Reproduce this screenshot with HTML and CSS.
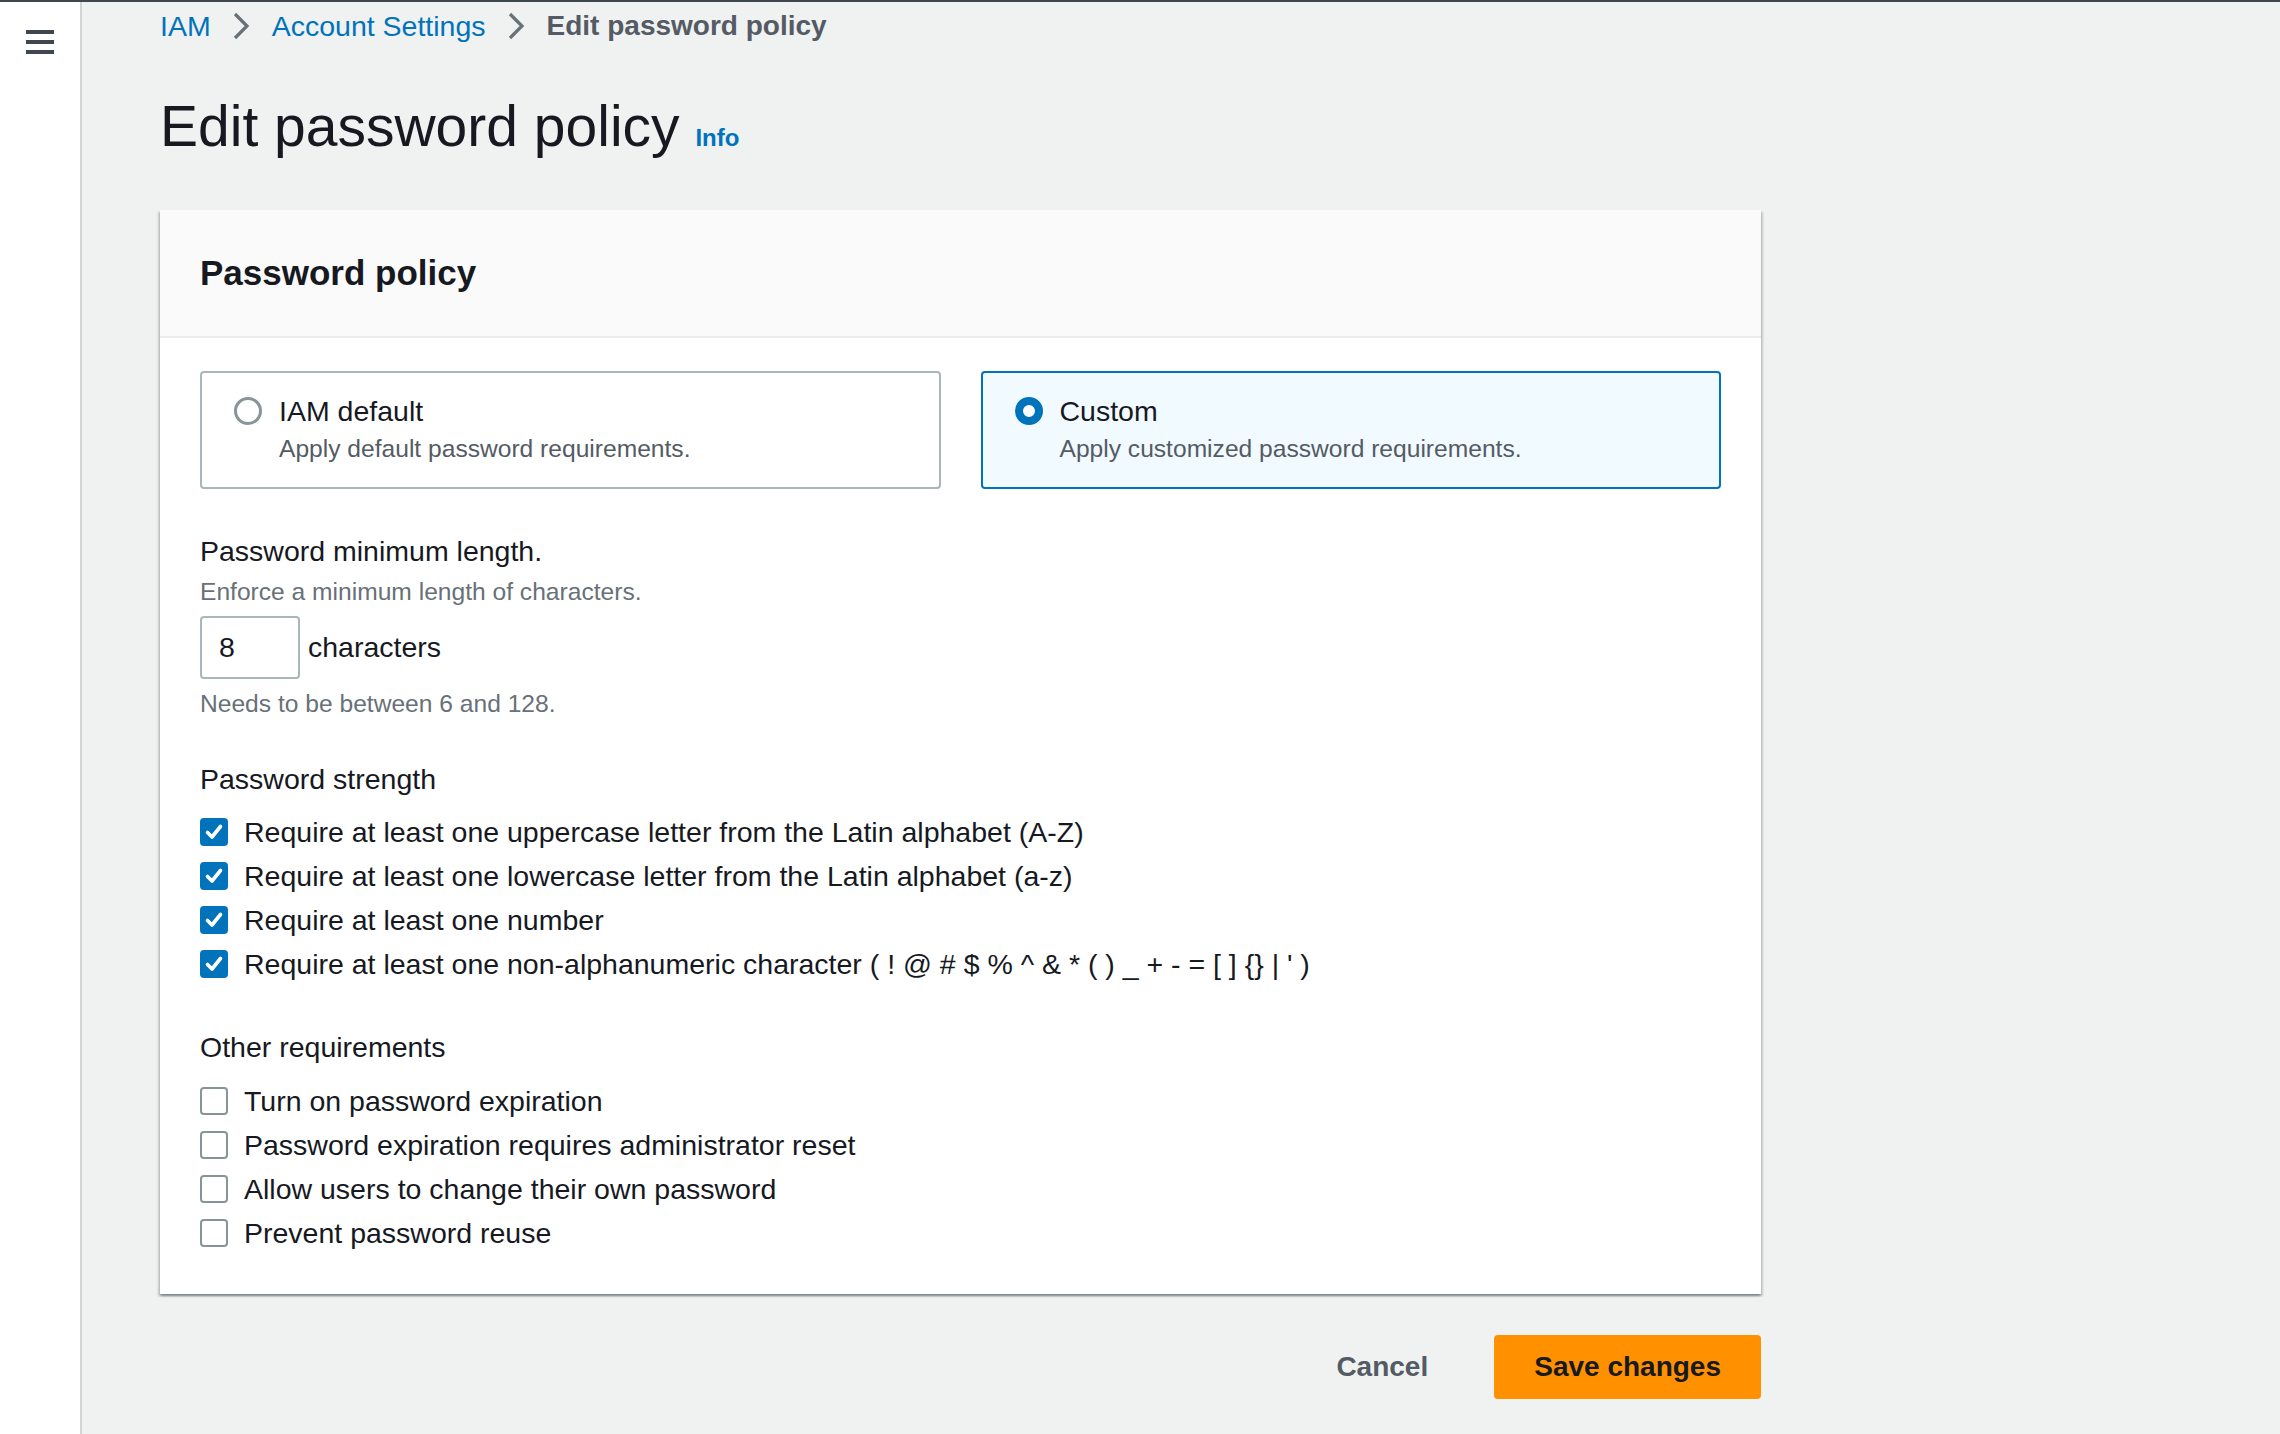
FILE: index.html
```html
<!DOCTYPE html>
<html lang="en">
<head>
<meta charset="utf-8">
<title>Edit password policy</title>
<link rel="stylesheet" href="styles.css">
</head>
<body>
<div class="topline"></div>
<div class="shell">
  <aside class="sidebar">
    <button class="hamburger" aria-label="Open navigation">
      <span></span><span></span><span></span>
    </button>
  </aside>
  <main class="main">
    <nav class="breadcrumbs">
      <a class="crumb-link" href="#">IAM</a>
      <svg class="chev" width="18" height="30" viewBox="0 0 18 30"><path d="M3 3 L15 15 L3 27" fill="none" stroke="#687078" stroke-width="3.2"/></svg>
      <a class="crumb-link" href="#">Account Settings</a>
      <svg class="chev" width="18" height="30" viewBox="0 0 18 30"><path d="M3 3 L15 15 L3 27" fill="none" stroke="#687078" stroke-width="3.2"/></svg>
      <span class="crumb-current">Edit password policy</span>
    </nav>

    <h1 class="page-title">Edit password policy <a class="info-link" href="#">Info</a></h1>

    <section class="card">
      <header class="card-header">
        <h2 class="card-title">Password policy</h2>
      </header>
      <div class="card-body">
        <div class="tiles">
          <label class="tile">
            <span class="radio"></span>
            <span class="tile-text">
              <span class="tile-title">IAM default</span>
              <span class="tile-desc">Apply default password requirements.</span>
            </span>
          </label>
          <label class="tile tile-selected">
            <span class="radio radio-checked"></span>
            <span class="tile-text">
              <span class="tile-title">Custom</span>
              <span class="tile-desc">Apply customized password requirements.</span>
            </span>
          </label>
        </div>

        <div class="field field-length">
          <div class="field-label">Password minimum length.</div>
          <div class="field-desc">Enforce a minimum length of characters.</div>
          <div class="length-row">
            <div class="num-input">8</div>
            <span class="unit">characters</span>
          </div>
          <div class="field-constraint">Needs to be between 6 and 128.</div>
        </div>

        <div class="field field-strength">
          <div class="field-label">Password strength</div>
          <ul class="checks">
            <li class="check-row"><span class="cbox cbox-on"><svg width="28" height="28" viewBox="0 0 28 28"><path d="M7.5 14.5 L12 19 L20.5 8.5" fill="none" stroke="#fff" stroke-width="3.6" stroke-linecap="round" stroke-linejoin="round"/></svg></span><span>Require at least one uppercase letter from the Latin alphabet (A-Z)</span></li>
            <li class="check-row"><span class="cbox cbox-on"><svg width="28" height="28" viewBox="0 0 28 28"><path d="M7.5 14.5 L12 19 L20.5 8.5" fill="none" stroke="#fff" stroke-width="3.6" stroke-linecap="round" stroke-linejoin="round"/></svg></span><span>Require at least one lowercase letter from the Latin alphabet (a-z)</span></li>
            <li class="check-row"><span class="cbox cbox-on"><svg width="28" height="28" viewBox="0 0 28 28"><path d="M7.5 14.5 L12 19 L20.5 8.5" fill="none" stroke="#fff" stroke-width="3.6" stroke-linecap="round" stroke-linejoin="round"/></svg></span><span>Require at least one number</span></li>
            <li class="check-row"><span class="cbox cbox-on"><svg width="28" height="28" viewBox="0 0 28 28"><path d="M7.5 14.5 L12 19 L20.5 8.5" fill="none" stroke="#fff" stroke-width="3.6" stroke-linecap="round" stroke-linejoin="round"/></svg></span><span>Require at least one non-alphanumeric character ( ! @ # $ % ^ &amp; * ( ) _ + - = [ ] {} | ' )</span></li>
          </ul>
        </div>

        <div class="field field-other">
          <div class="field-label">Other requirements</div>
          <ul class="checks">
            <li class="check-row"><span class="cbox"></span><span>Turn on password expiration</span></li>
            <li class="check-row"><span class="cbox"></span><span>Password expiration requires administrator reset</span></li>
            <li class="check-row"><span class="cbox"></span><span>Allow users to change their own password</span></li>
            <li class="check-row"><span class="cbox"></span><span>Prevent password reuse</span></li>
          </ul>
        </div>
      </div>
    </section>

    <div class="actions">
      <button class="btn btn-link">Cancel</button>
      <button class="btn btn-primary">Save changes</button>
    </div>
  </main>
</div>
</body>
</html>
```

FILE: styles.css
```css
* { box-sizing: border-box; }

html, body {
  margin: 0;
  padding: 0;
  height: 100%;
}

body {
  font-family: "Liberation Sans", Arial, sans-serif;
  font-size: 28.5px;
  color: #16191f;
  background: #f0f1f1;
}

.topline {
  height: 2px;
  background: #414750;
}

.shell {
  display: flex;
  min-height: calc(100% - 2px);
}

.sidebar {
  width: 82px;
  flex: 0 0 82px;
  background: #ffffff;
  border-right: 2px solid #cfd4d4;
}

.hamburger {
  display: flex;
  flex-direction: column;
  gap: 6px;
  margin: 28px 0 0 26px;
  padding: 0;
  border: 0;
  background: none;
}

.hamburger span {
  display: block;
  width: 28px;
  height: 4px;
  background: #414750;
}

.main {
  flex: 1;
  padding: 4px 0 0 78px;
}

.breadcrumbs {
  display: flex;
  align-items: center;
  height: 40px;
  line-height: 40px;
}

.crumb-link {
  color: #0073bb;
  text-decoration: none;
}

.chev {
  margin: 0 22px 0 21px;
}

.crumb-current {
  color: #545b64;
  font-weight: bold;
  font-size: 28px;
}

.page-title {
  margin: 48px 0 0 0;
  font-size: 57px;
  font-weight: normal;
  line-height: 64px;
  color: #16191f;
}

.info-link {
  margin-left: 0;
  font-size: 24px;
  font-weight: bold;
  color: #0073bb;
  text-decoration: none;
}

.card {
  width: 1601px;
  margin-top: 40px;
  background: #ffffff;
  box-shadow: 0 2px 2px rgba(0, 28, 36, 0.3), 2px 2px 2px rgba(0, 28, 36, 0.15), -2px 2px 2px rgba(0, 28, 36, 0.15);
}

.card-header {
  padding: 40px 40px 41px 40px;
  background: #fafafa;
  border-bottom: 2px solid #eaeded;
}

.card-title {
  margin: 0;
  font-size: 35px;
  line-height: 45px;
  font-weight: bold;
}

.card-body {
  padding: 33px 40px 39px 40px;
}

.tiles {
  display: grid;
  grid-template-columns: 1fr 1fr;
  gap: 40px;
}

.tile {
  display: flex;
  align-items: flex-start;
  gap: 17px;
  padding: 18px 32px 20px 32px;
  border: 2px solid #aab7b8;
  border-radius: 4px;
  background: #ffffff;
}

.tile-selected {
  border-color: #0073bb;
  background: #f1faff;
}

.radio {
  flex: 0 0 28px;
  width: 28px;
  height: 28px;
  margin-top: 6px;
  border: 3px solid #879596;
  border-radius: 50%;
  background: #ffffff;
}

.radio-checked {
  border: 8px solid #0073bb;
}

.tile-text {
  display: flex;
  flex-direction: column;
}

.tile-title {
  line-height: 40px;
}

.tile-desc {
  font-size: 24.6px;
  line-height: 36px;
  color: #545b64;
}

.field-length {
  margin-top: 42px;
}

.field-label {
  line-height: 40px;
}

.field-desc,
.field-constraint {
  font-size: 24.6px;
  line-height: 36px;
  color: #687078;
}

.field-length .field-desc {
  margin-top: 3px;
}

.length-row {
  display: flex;
  align-items: center;
  gap: 8px;
  margin-top: 6px;
}

.num-input {
  width: 100px;
  height: 63px;
  padding-left: 17px;
  border: 2px solid #aab7b8;
  border-radius: 4px;
  background: #ffffff;
  line-height: 59px;
}

.field-constraint {
  margin-top: 7px;
}

.field-strength {
  margin-top: 37px;
}

.field-other {
  margin-top: 41px;
}

.checks {
  list-style: none;
  margin: 11px 0 0 0;
  padding: 0;
}

.field-other .checks {
  margin-top: 12px;
}

.check-row {
  display: flex;
  align-items: center;
  gap: 16px;
  height: 44px;
}

.cbox {
  flex: 0 0 28px;
  width: 28px;
  height: 28px;
  border: 2px solid #879596;
  border-radius: 4px;
  background: #ffffff;
}

.cbox-on {
  border: 0;
  background: #0073bb;
}

.cbox-on svg {
  display: block;
}

.actions {
  width: 1601px;
  display: flex;
  justify-content: flex-end;
  align-items: center;
  gap: 26px;
  margin-top: 41px;
}

.btn {
  height: 64px;
  border: 0;
  border-radius: 4px;
  font-family: "Liberation Sans", Arial, sans-serif;
  font-size: 28px;
  font-weight: bold;
  cursor: pointer;
}

.btn-link {
  padding: 0 40px;
  background: transparent;
  color: #545b64;
}

.btn-primary {
  padding: 0 40px;
  background: #ff9000;
  color: #16191f;
}
```
